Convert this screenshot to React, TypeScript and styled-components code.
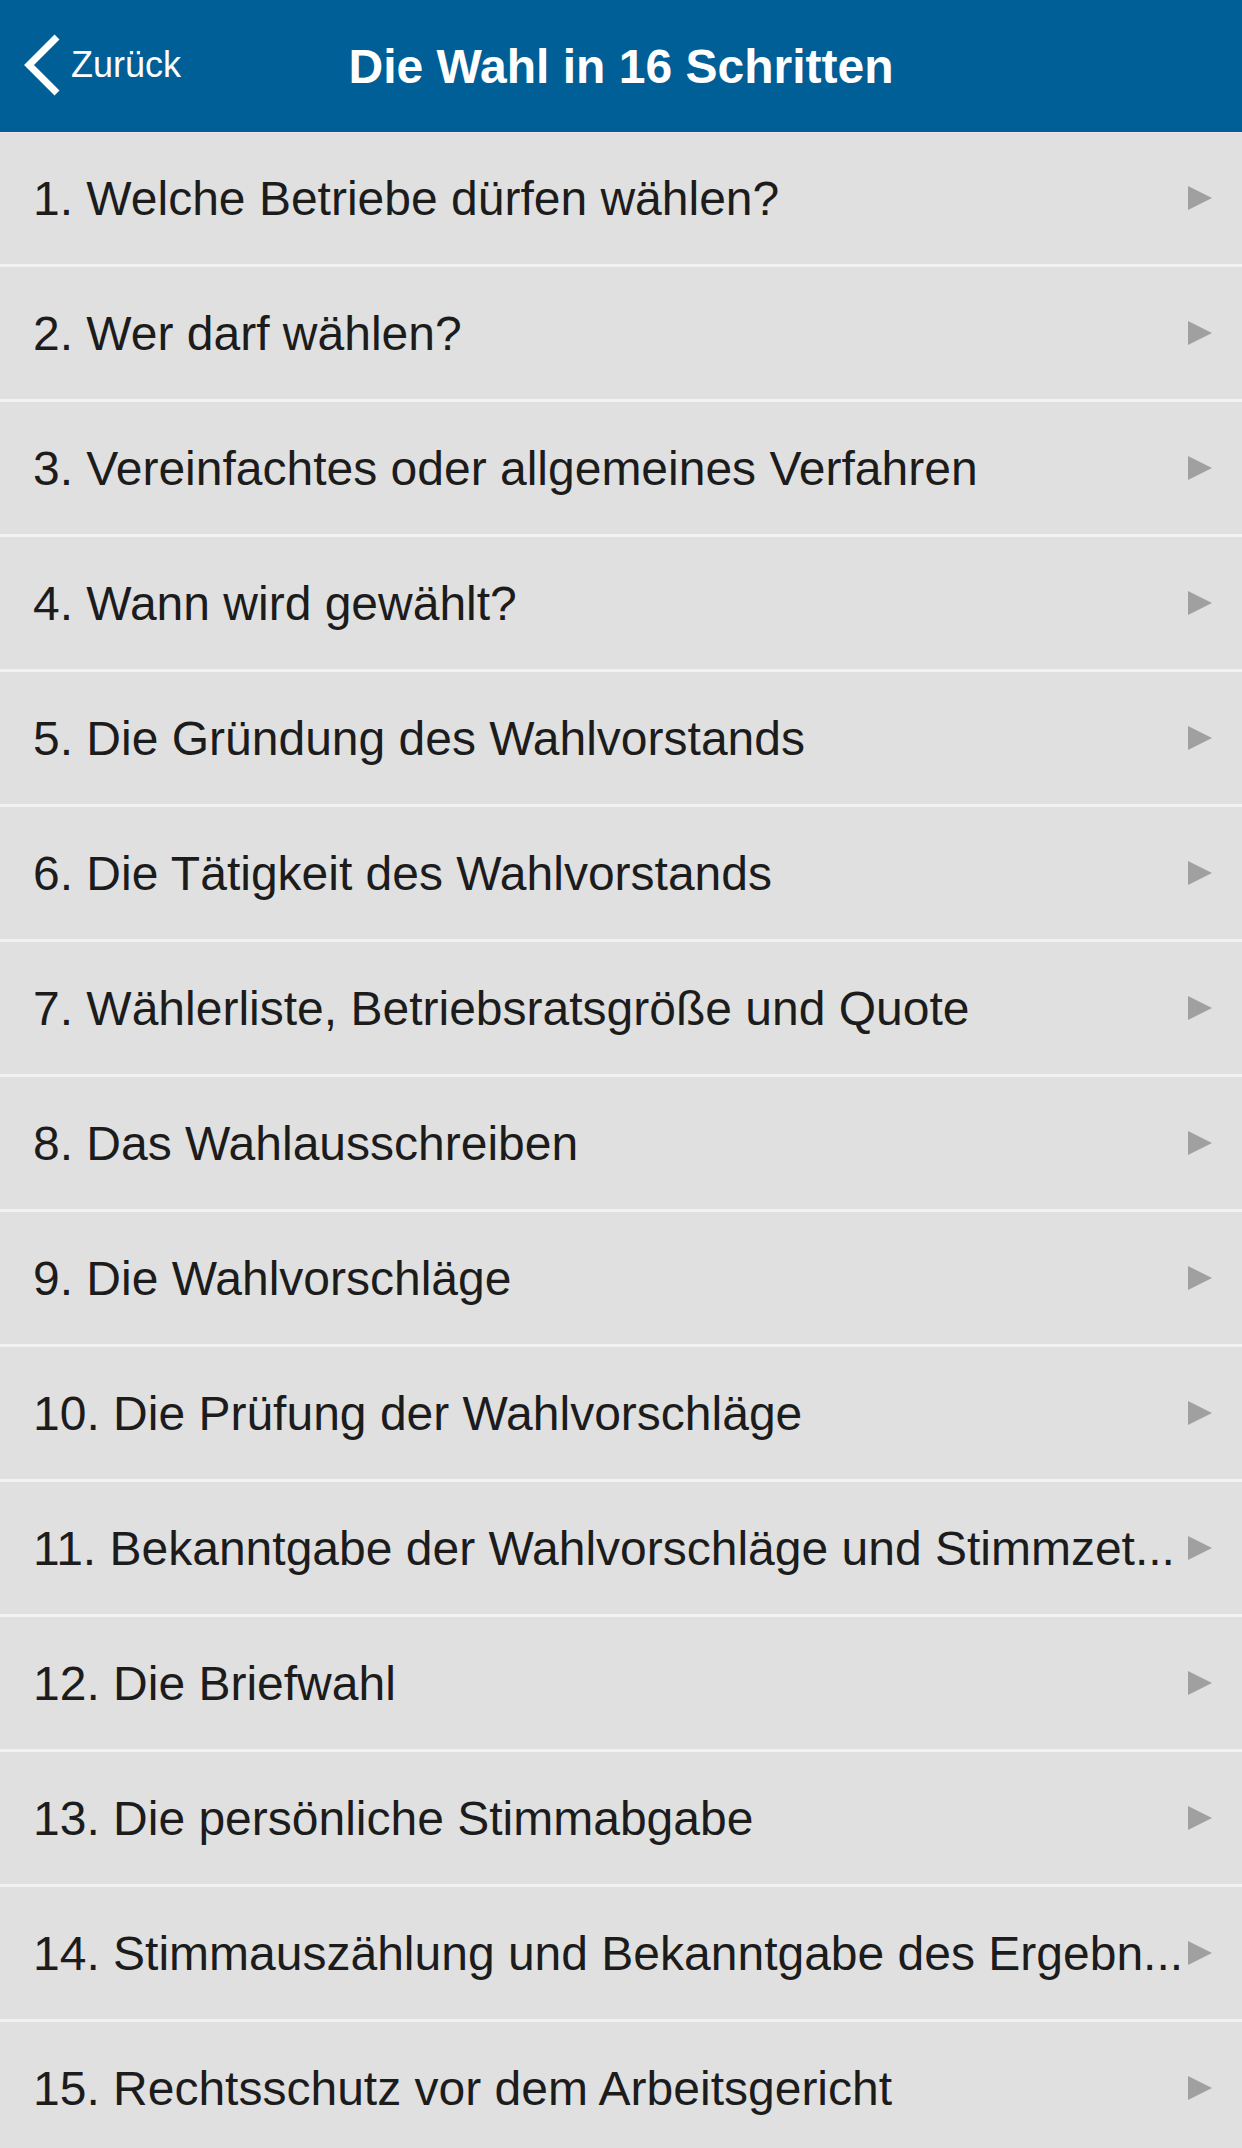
import React from "react";
import styled, { createGlobalStyle } from "styled-components";

const GlobalStyle = createGlobalStyle`
    html, body {
        margin: 0;
        padding: 0;
        background: #e0e0e0;
    }
    body {
        font-family: "Liberation Sans", Arial, Helvetica, sans-serif;
        -webkit-font-smoothing: antialiased;
    }
`;

const Page = styled.div`
    width: 1242px;
    height: 2148px;
    background: #e0e0e0;
    overflow: hidden;
`;

const NavBar = styled.header`
    position: relative;
    height: 132px;
    background: #015f98;
    display: flex;
    align-items: center;
    justify-content: center;
    color: #ffffff;
`;

const BackButton = styled.button`
    position: absolute;
    left: 23px;
    top: 34px;
    display: flex;
    align-items: center;
    gap: 10px;
    padding: 0;
    border: none;
    background: none;
    color: #ffffff;
    font-family: "Liberation Sans", Arial, sans-serif;
    font-size: 36px;
    cursor: pointer;
`;

const Title = styled.h1`
    margin: 0;
    font-size: 48px;
    font-weight: 700;
`;

const List = styled.ul`
    list-style: none;
    margin: 0;
    padding: 0;
`;

const Row = styled.li`
    height: 132px;
    display: flex;
    align-items: center;
    padding: 0 30px 0 33px;
    border-bottom: 3px solid #f2f2f2;
    background: #e0e0e0;
    color: #1c1c1c;

    &:first-child {
        box-shadow: inset 0 1px 0 #ebe5e7;
    }
`;

const Label = styled.span`
    flex: 1;
    min-width: 0;
    font-size: 48px;
    white-space: nowrap;
    overflow: hidden;
`;

const Arrow = styled.span`
    flex: none;
    margin-left: 6px;
    width: 0;
    height: 0;
    border-top: 12.5px solid transparent;
    border-bottom: 12.5px solid transparent;
    border-left: 24px solid #a0a0a0;
`;

const steps = [
    "1. Welche Betriebe dürfen wählen?",
    "2. Wer darf wählen?",
    "3. Vereinfachtes oder allgemeines Verfahren",
    "4. Wann wird gewählt?",
    "5. Die Gründung des Wahlvorstands",
    "6. Die Tätigkeit des Wahlvorstands",
    "7. Wählerliste, Betriebsratsgröße und Quote",
    "8. Das Wahlausschreiben",
    "9. Die Wahlvorschläge",
    "10. Die Prüfung der Wahlvorschläge",
    "11. Bekanntgabe der Wahlvorschläge und Stimmzet...",
    "12. Die Briefwahl",
    "13. Die persönliche Stimmabgabe",
    "14. Stimmauszählung und Bekanntgabe des Ergebn...",
    "15. Rechtsschutz vor dem Arbeitsgericht",
];

const Chevron = () => (
    <svg width="38" height="62" viewBox="0 0 38 62">
        <polyline points="34,3 6,31 34,59" fill="none" stroke="#ffffff" strokeWidth="7" />
    </svg>
);

export default function App() {
    return (
        <Page>
            <GlobalStyle />
            <NavBar>
                <BackButton>
                    <Chevron />
                    <span>Zurück</span>
                </BackButton>
                <Title>Die Wahl in 16 Schritten</Title>
            </NavBar>
            <List>
                {steps.map((step, index) => (
                    <Row key={index}>
                        <Label>{step}</Label>
                        <Arrow />
                    </Row>
                ))}
            </List>
        </Page>
    );
}
